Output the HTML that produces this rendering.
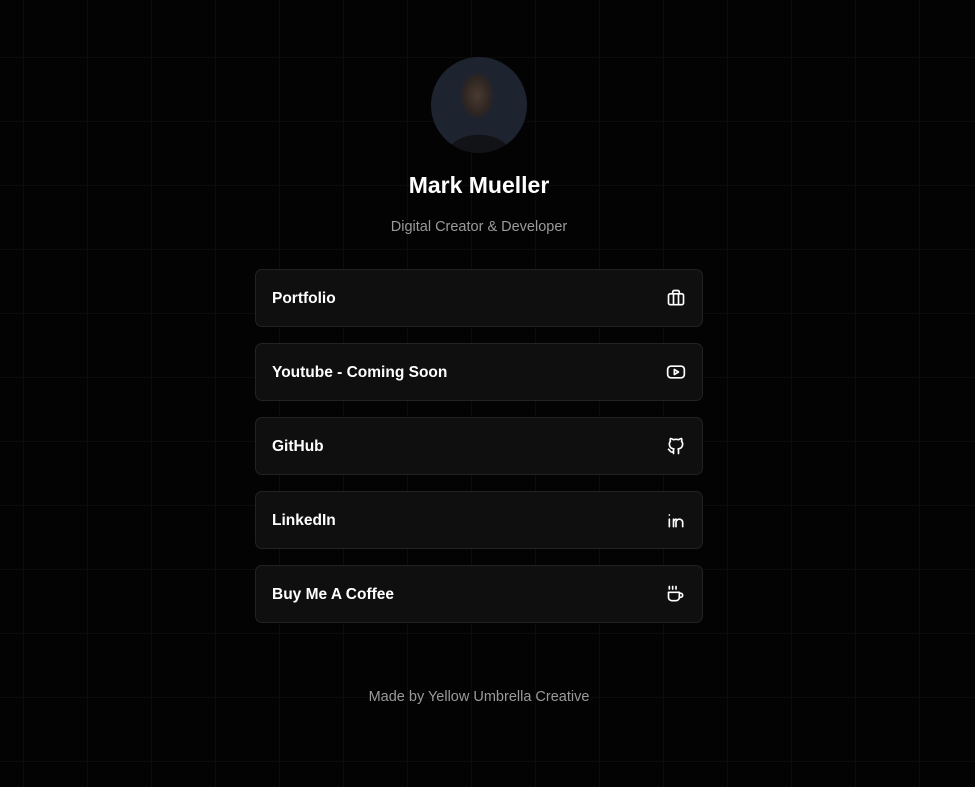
<!DOCTYPE html>
<html><head><meta charset="utf-8"><style>
html,body{margin:0;height:100%;}
body{width:975px;height:787px;background-color:#030303;
background-image:linear-gradient(to right,#0c0c0c 1px,transparent 1px),linear-gradient(to bottom,#0c0c0c 1px,transparent 1px);
background-size:64px 64px;background-position:23px 57px;
font-family:"Liberation Sans",Arial,sans-serif;color:#fff;position:relative;overflow:hidden;}
.av{position:absolute;left:431px;top:57px;width:96px;height:96px;border-radius:50%;
background:radial-gradient(ellipse 22px 30px at 48% 40%,#4a3a32 0%,#2e2521 60%,transparent 80%),radial-gradient(ellipse 50px 30px at 50% 100%,#121317 0,#121317 60%,transparent 62%),#1e2330;}
h1{position:absolute;top:172px;left:0;width:958px;margin:0;text-align:center;font-size:23px;font-weight:bold;}
.sub{position:absolute;top:219px;left:0;width:958px;text-align:center;font-size:14.5px;color:#9a9a9a;}
.card{position:absolute;left:255px;width:446px;height:56px;background:#0f0f0f;border:1px solid #222;border-radius:7px;}
.card span{position:absolute;left:16px;top:20px;font-size:15.5px;font-weight:bold;}
.card svg{position:absolute;right:16px;top:18px;}
.foot{position:absolute;top:689px;left:0;width:958px;text-align:center;font-size:14.5px;color:#9a9a9a;}
</style></head><body>
<div class="av"></div>
<h1>Mark Mueller</h1>
<div class="sub">Digital Creator &amp; Developer</div>
<div class="card" style="top:269px"><span>Portfolio</span>
<svg width="20" height="20" viewBox="0 0 24 24" fill="none" stroke="#fff" stroke-width="2" stroke-linecap="round" stroke-linejoin="round"><rect x="3" y="7" width="18" height="13" rx="2"/><path d="M8 7V5a2 2 0 0 1 2-2h4a2 2 0 0 1 2 2v2M9 7v13M15 7v13"/></svg></div>
<div class="card" style="top:343px"><span>Youtube - Coming Soon</span>
<svg width="20" height="20" viewBox="0 0 24 24" fill="none" stroke="#fff" stroke-width="2" stroke-linecap="round" stroke-linejoin="round"><rect x="2" y="5" width="20" height="14" rx="4"/><path d="M10 9l5 3-5 3z"/></svg></div>
<div class="card" style="top:417px"><span>GitHub</span>
<svg width="20" height="20" viewBox="0 0 24 24" fill="none" stroke="#fff" stroke-width="2" stroke-linecap="round" stroke-linejoin="round"><path d="M9 19c-4.3 1.4-4.3-2.5-6-3m12 5v-3.5c0-1 .1-1.4-.5-2 2.8-.3 5.5-1.4 5.5-6a4.6 4.6 0 0 0-1.3-3.2 4.2 4.2 0 0 0-.1-3.2s-1.1-.3-3.5 1.3a12.3 12.3 0 0 0-6.2 0C6.5 2.8 5.4 3.1 5.4 3.1a4.2 4.2 0 0 0-.1 3.2A4.6 4.6 0 0 0 4 9.5c0 4.6 2.7 5.7 5.5 6-.6.6-.6 1.2-.5 2V21"/></svg></div>
<div class="card" style="top:491px"><span>LinkedIn</span>
<svg width="20" height="20" viewBox="0 0 24 24" fill="none" stroke="#fff" stroke-width="2" stroke-linecap="round" stroke-linejoin="round"><path d="M4 11v9M4 6v.01M9 20v-9M20 20v-5a4 4 0 0 0-8 0v5M9 14a4 4 0 0 1 3-3"/></svg></div>
<div class="card" style="top:565px"><span>Buy Me A Coffee</span>
<svg width="20" height="20" viewBox="0 0 24 24" fill="none" stroke="#fff" stroke-width="2" stroke-linecap="round" stroke-linejoin="round"><path d="M3 10h13v6a4 4 0 0 1-4 4H7a4 4 0 0 1-4-4z"/><path d="M16 11h1.5a2.5 2.5 0 0 1 0 5H16M8 3v3M12 3v3M4 3v3"/></svg></div>
<div class="foot">Made by Yellow Umbrella Creative</div>
</body></html>
